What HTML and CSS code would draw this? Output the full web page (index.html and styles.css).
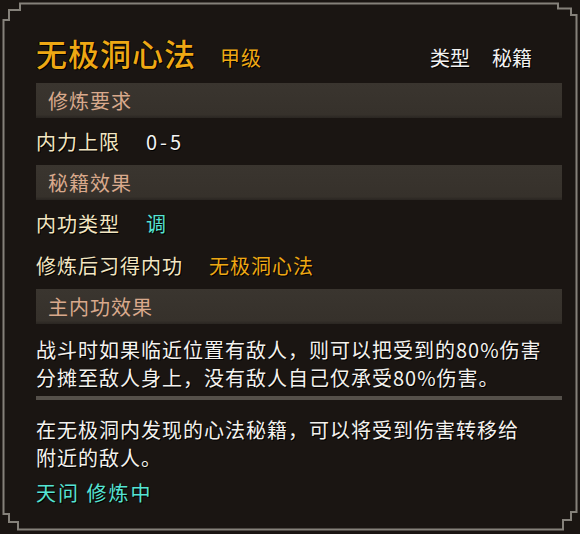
FILE: index.html
```html
<!DOCTYPE html>
<html lang="zh">
<head>
<meta charset="utf-8">
<link rel="stylesheet" href="styles.css">
</head>
<body>
<div class="panel">
  <svg class="frame" width="580" height="534" viewBox="0 0 580 534">
    <path d="M20 3.5 H558 V8.5 H571 V15 H576.5 V512 H571 V520 H563 V529.5 H18 V522 H9 V514 H3.5 V20 H9 V10 H20 Z" fill="none" stroke="#85817a" stroke-width="2"/>
  </svg>
  <div class="title-row">
    <span class="title">无极洞心法</span>
    <span class="grade">甲级</span>
    <span class="type"><span>类型</span><span>秘籍</span></span>
  </div>
  <div class="section">修炼要求</div>
  <div class="row"><span class="label">内力上限</span><span class="val white">0-5</span></div>
  <div class="section">秘籍效果</div>
  <div class="row"><span class="label">内功类型</span><span class="val cyan">调</span></div>
  <div class="row"><span class="label">修炼后习得内功</span><span class="val orange">无极洞心法</span></div>
  <div class="section">主内功效果</div>
  <p class="desc">战斗时如果临近位置有敌人，则可以把受到的80%伤害<br>分摊至敌人身上，没有敌人自己仅承受80%伤害。</p>
  <div class="divider"></div>
  <p class="desc second">在无极洞内发现的心法秘籍，可以将受到伤害转移给<br>附近的敌人。</p>
  <div class="status">天问 修炼中</div>
</div>
</body>
</html>
```
FILE: styles.css
```css
html, body {
  margin: 0;
  padding: 0;
  background: #1a1512;
}
.panel {
  position: relative;
  width: 580px;
  height: 534px;
  box-sizing: border-box;
  padding: 31px 18px 0 36px;
  background: #1a1512;
  font-family: "Noto Sans CJK SC", "Noto Sans", sans-serif;
  color: #f4f0e8;
  overflow: hidden;
}
.frame {
  position: absolute;
  left: 0;
  top: 0;
  pointer-events: none;
}
.title-row {
  display: flex;
  align-items: baseline;
  height: 44px;
}
.title {
  font-size: 31px;
  font-weight: 500;
  line-height: 44px;
  letter-spacing: 1px;
  color: #eea814;
  text-shadow: 1px 1px 0 #000, -1px 0 0 #000;
}
.grade {
  margin-left: 24px;
  font-size: 20px;
  letter-spacing: 1px;
  color: #eea814;
  text-shadow: 1px 1px 0 #000;
}
.type {
  margin-left: auto;
  margin-right: 30px;
  display: flex;
  gap: 22px;
  font-size: 20px;
  color: #f2f2f2;
  text-shadow: 1px 1px 0 #000;
}
.section {
  margin-top: 8px;
  height: 35px;
  line-height: 35px;
  padding-left: 12px;
  font-size: 20px;
  letter-spacing: 1px;
  color: #d9a98c;
  background: linear-gradient(to bottom, #3a352f 0, #36312b 90%, #2a2622 100%);
}
.row + .section { margin-top: 2px; }
.row {
  height: 42px;
  line-height: 42px;
  font-size: 20px;
  letter-spacing: 1px;
  display: flex;
}
.section + .row { margin-top: 3px; }
.label {
  color: #f3e6c2;
  text-shadow: 1px 1px 0 #000;
}
.val {
  margin-left: 26px;
  text-shadow: 1px 1px 0 #000;
}
.white { color: #f4f4f4; letter-spacing: 3px; }
.cyan { color: #55e4d4; }
.orange { color: #eea814; }
.desc {
  margin: 12px 0 0 0;
  font-size: 20px;
  line-height: 28px;
  letter-spacing: 1px;
  color: #f4f2ee;
  text-shadow: 1px 1px 0 #000;
}
.desc.second { margin-top: 16px; }
.divider {
  margin-top: 4px;
  height: 4px;
  background: #55504a;
}
.status {
  margin-top: 7px;
  font-size: 20px;
  line-height: 28px;
  letter-spacing: 2px;
  color: #55e4d4;
  text-shadow: 1px 1px 0 #000;
}
```
